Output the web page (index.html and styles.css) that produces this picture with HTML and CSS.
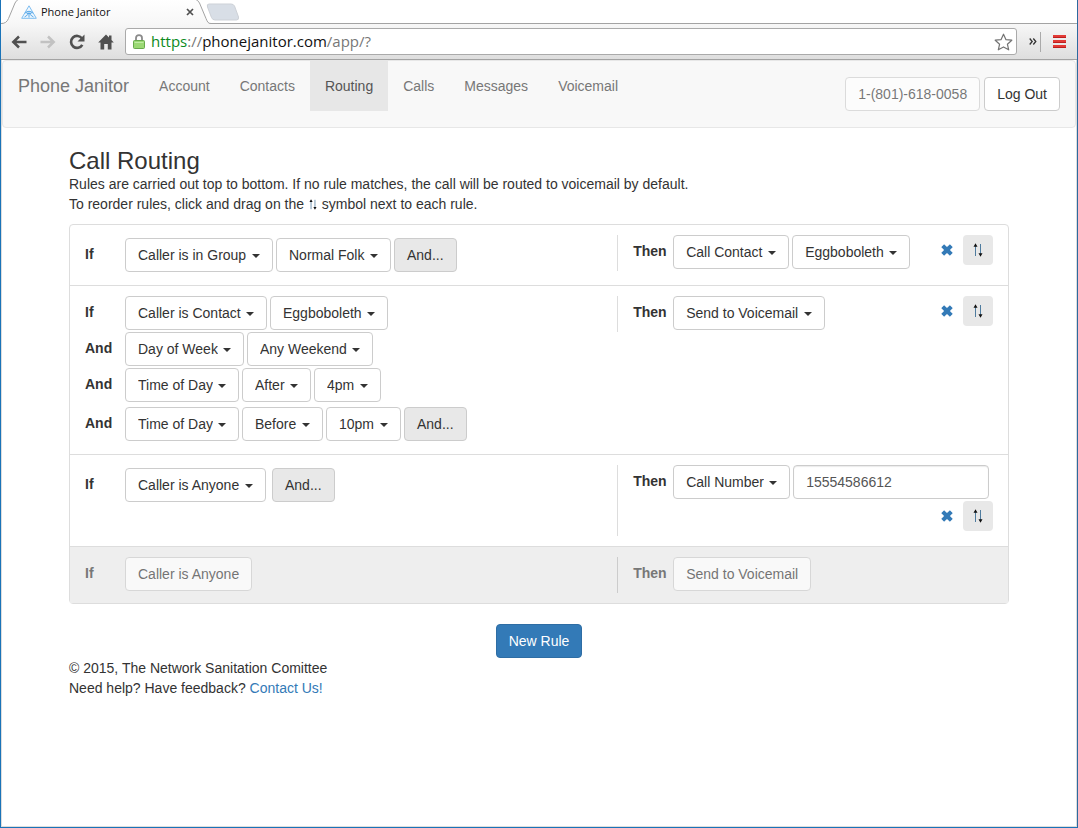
FILE: index.html
```html
<!DOCTYPE html>
<html lang="en">
<head>
<meta charset="utf-8">
<title>Phone Janitor</title>
<link rel="stylesheet" href="styles.css">
</head>
<body>
<svg class="sprite" aria-hidden="true">
  <symbol id="remove" viewBox="0 0 12 12"><path d="M0.4 2.9 2.9 0.4Q3.1 0.2 3.3 0.4L6 3.1 8.7 0.4Q8.9 0.2 9.1 0.4L11.6 2.9Q11.8 3.1 11.6 3.3L8.9 6 11.6 8.7Q11.8 8.9 11.6 9.1L9.1 11.6Q8.9 11.8 8.7 11.6L6 8.9 3.3 11.6Q3.1 11.8 2.9 11.6L0.4 9.1Q0.2 8.9 0.4 8.7L3.1 6 0.4 3.3Q0.2 3.1 0.4 2.9Z" fill="#337ab7"/></symbol>
  <symbol id="updown" viewBox="0 0 10 14"><path d="M2.500 13V2M7.500 1V12" stroke="#3d6f96" stroke-width="0.900" fill="none"/><path d="M2.500 0.300 4.500 3.800H0.500ZM7.500 13.700 9.500 10.200H5.500Z" fill="#111"/></symbol>
</svg>
<div class="window">
  <header class="browser">
    <div class="tabstrip">
      <div class="tab">
        <svg class="tab-shape" width="210" height="24" viewBox="0 0 210 24" aria-hidden="true">
          <defs><linearGradient id="tabfill" x1="0" y1="0" x2="0" y2="1"><stop offset="0" stop-color="#ffffff"/><stop offset="1" stop-color="#f7f7f7"/></linearGradient></defs>
          <path d="M0 24V23.500C4 23.500 6 22 7.500 18.500L14 3Q15.500 0 18 -1H194Q197 0 198.500 3L205 18.500C206.500 22 207 23.500 210 23.500V24Z" fill="url(#tabfill)"/>
          <path d="M0 23.500C4 23.500 6 22 7.500 18.500L14 3Q15.500 0 18 -1M194 -1Q197 0 198.500 3L205 18.500C206.500 22 207 23.500 210 23.500" fill="none" stroke="#a3a3a3"/>
        </svg>
        <svg class="favicon" width="16" height="14" viewBox="0 0 16 14" aria-hidden="true"><path d="M8 0.800 15.300 13.300H0.700Z" fill="#f1f8fe" stroke="#7dbdf0" stroke-width="1"/><path d="M4.200 8.200Q8 4.300 11.800 8.200M5.800 9.300Q8 7.200 10.200 9.300" fill="none" stroke="#58a8e8" stroke-width="1.200"/><path d="M8 8V12.500M3.500 12 6.500 10M12.500 12 9.500 10" stroke="#58a8e8" fill="none"/></svg>
        <span class="tab-title">Phone Janitor</span>
        <button class="tool tab-close" type="button" aria-label="Close tab"><svg width="8" height="8" viewBox="0 0 8 8"><path d="M1 1 7 7M7 1 1 7" stroke="#505050" stroke-width="1.700"/></svg></button>
      </div>
      <button class="tool new-tab" type="button" aria-label="New tab"><svg width="34" height="18" viewBox="0 0 34 18"><path d="M3 1H25Q27.500 1 28.500 3L32.500 14Q33 17 30.500 17H9Q6.500 17 5.500 14.500L1.500 4Q0.500 1 3 1Z" fill="#d8dee6" stroke="#cdd1d7"/></svg></button>
    </div>
    <div class="toolbar">
      <div class="nav-tools">
        <button class="tool" type="button" aria-label="Back"><svg width="16" height="16" viewBox="0 0 16 16"><path d="M15.500 8H3M8 2.500 2.300 8 8 13.500" fill="none" stroke="#505050" stroke-width="2.500"/></svg></button>
        <button class="tool" type="button" aria-label="Forward"><svg width="16" height="16" viewBox="0 0 16 16"><path d="M0.500 8H13M8 2.500 13.700 8 8 13.500" fill="none" stroke="#c2c2c2" stroke-width="2.500"/></svg></button>
        <button class="tool" type="button" aria-label="Reload"><svg width="16" height="16" viewBox="0 0 16 16"><path d="M13 4.500A6 6 0 1 0 13.300 10.800" fill="none" stroke="#505050" stroke-width="2.600"/><path d="M15.500 0.500V7.500H8.500Z" fill="#505050"/></svg></button>
        <button class="tool" type="button" aria-label="Home"><svg width="16" height="16" viewBox="0 0 16 16"><path d="M8 0.500 11 3.500V1.500H13.500V6L15.800 8.500H13.500V15.500H9.800V10H6.200V15.500H2.500V8.500H0.200Z" fill="#505050"/></svg></button>
      </div>
      <div class="address">
        <svg width="12" height="15" viewBox="0 0 12 15" aria-hidden="true"><path d="M3 8V4Q3 1.200 6 1.200T9 4V8" fill="none" stroke="#8b8b8b" stroke-width="1.800"/><rect x="0.500" y="6.500" width="11" height="8" rx="1" fill="#9ad873" stroke="#67a94c"/><path d="M1.500 8.500H10.500" stroke="#c0ebA5"/></svg>
        <div class="url" role="textbox" aria-label="Address" contenteditable="true" spellcheck="false"><span class="url-scheme">https</span><span class="url-dim">://</span>phonejanitor.com<span class="url-dim">/app/?</span></div>
        <button class="tool" type="button" aria-label="Bookmark"><svg width="19" height="18" viewBox="0 0 19 18"><path d="M9.500 1.200 12 6.700 17.800 7.200 13.400 11.200 14.700 16.800 9.500 13.900 4.300 16.800 5.600 11.200 1.200 7.200 7 6.700Z" fill="#fff" stroke="#737373" stroke-width="1.200" stroke-linejoin="round"/></svg></button>
      </div>
      <button class="tool overflow" type="button" aria-label="More"><svg width="8" height="7" viewBox="0 0 8 7"><path d="M0.700 0.500 3.200 3.500 0.700 6.500M4.300 0.500 6.800 3.500 4.300 6.500" fill="none" stroke="#333" stroke-width="1.300"/></svg></button>
      <button class="tool menu" type="button" aria-label="Menu"><svg width="13" height="13" viewBox="0 0 13 13"><path d="M0 1.500H13M0 6.500H13M0 11.500H13" stroke="#e23b36" stroke-width="3"/><path d="M0 2.500H13M0 7.500H13M0 12.500H13" stroke="#bd1f1f"/></svg></button>
    </div>
  </header>

  <nav class="navbar">
    <a class="brand" href="#">Phone Janitor</a>
    <ul class="nav-links">
      <li><a href="#">Account</a></li>
      <li><a href="#">Contacts</a></li>
      <li><a class="active" href="#" aria-current="page">Routing</a></li>
      <li><a href="#">Calls</a></li>
      <li><a href="#">Messages</a></li>
      <li><a href="#">Voicemail</a></li>
    </ul>
    <div class="nav-account">
      <button class="btn" type="button" disabled>1-(801)-618-0058</button>
      <button class="btn" type="button">Log Out</button>
    </div>
  </nav>

  <main class="container">
    <h1>Call Routing</h1>
    <p>Rules are carried out top to bottom. If no rule matches, the call will be routed to voicemail by default.</p>
    <p>To reorder rules, click and drag on the <svg class="inline-icon" width="10" height="11" role="img" aria-label="up and down arrows"><use href="#updown"/></svg> symbol next to each rule.</p>

    <ul class="rules">
      <li class="rule">
        <div class="conditions">
          <div class="line line-last"><b class="word">If</b>
            <select class="btn dropdown" aria-label="Condition"><option>Caller is in Group</option></select>
            <select class="btn dropdown" aria-label="Group"><option>Normal Folk</option></select>
            <button class="btn btn-and" type="button">And...</button></div>
        </div>
        <div class="outcome">
          <div class="line"><b class="word">Then</b>
            <select class="btn dropdown" aria-label="Action"><option>Call Contact</option></select>
            <select class="btn dropdown" aria-label="Contact"><option>Eggboboleth</option></select></div>
          <div class="actions">
            <button class="tool" type="button" aria-label="Remove rule"><svg width="12" height="12"><use href="#remove"/></svg></button>
            <button class="drag" type="button" aria-label="Reorder rule"><svg width="10" height="14"><use href="#updown"/></svg></button></div>
        </div>
      </li>
      <li class="rule">
        <div class="conditions">
          <div class="line"><b class="word">If</b>
            <select class="btn dropdown" aria-label="Condition"><option>Caller is Contact</option></select>
            <select class="btn dropdown" aria-label="Contact"><option>Eggboboleth</option></select></div>
          <div class="line"><b class="word">And</b>
            <select class="btn dropdown" aria-label="Condition"><option>Day of Week</option></select>
            <select class="btn dropdown" aria-label="Day"><option>Any Weekend</option></select></div>
          <div class="line"><b class="word">And</b>
            <select class="btn dropdown" aria-label="Condition"><option>Time of Day</option></select>
            <select class="btn dropdown" aria-label="Comparison"><option>After</option></select>
            <select class="btn dropdown" aria-label="Time"><option>4pm</option></select></div>
          <div class="line line-last"><b class="word">And</b>
            <select class="btn dropdown" aria-label="Condition"><option>Time of Day</option></select>
            <select class="btn dropdown" aria-label="Comparison"><option>Before</option></select>
            <select class="btn dropdown" aria-label="Time"><option>10pm</option></select>
            <button class="btn btn-and" type="button">And...</button></div>
        </div>
        <div class="outcome">
          <div class="line"><b class="word">Then</b>
            <select class="btn dropdown" aria-label="Action"><option>Send to Voicemail</option></select></div>
          <div class="actions">
            <button class="tool" type="button" aria-label="Remove rule"><svg width="12" height="12"><use href="#remove"/></svg></button>
            <button class="drag" type="button" aria-label="Reorder rule"><svg width="10" height="14"><use href="#updown"/></svg></button></div>
        </div>
      </li>
      <li class="rule">
        <div class="conditions">
          <div class="line line-last line-single"><b class="word">If</b>
            <select class="btn dropdown" aria-label="Condition"><option>Caller is Anyone</option></select>
            <button class="btn btn-and" type="button">And...</button></div>
        </div>
        <div class="outcome">
          <div class="line"><b class="word">Then</b>
            <select class="btn dropdown" aria-label="Action"><option>Call Number</option></select>
            <input class="number" type="text" value="15554586612" aria-label="Phone number"></div>
          <div class="actions">
            <button class="tool" type="button" aria-label="Remove rule"><svg width="12" height="12"><use href="#remove"/></svg></button>
            <button class="drag" type="button" aria-label="Reorder rule"><svg width="10" height="14"><use href="#updown"/></svg></button></div>
        </div>
      </li>
      <li class="rule rule-default">
        <div class="conditions">
          <div class="line"><b class="word">If</b>
            <button class="btn" type="button" disabled>Caller is Anyone</button></div>
        </div>
        <div class="outcome">
          <div class="line"><b class="word">Then</b>
            <button class="btn" type="button" disabled>Send to Voicemail</button></div>
        </div>
      </li>
    </ul>
    <div class="new-rule"><button class="btn btn-primary" type="button">New Rule</button></div>
    <footer>
      <p>© 2015, The Network Sanitation Comittee</p>
      <p>Need help? Have feedback? <a href="#">Contact Us!</a></p>
    </footer>
  </main>
</div>
</body>
</html>
```

FILE: styles.css
```css
* { box-sizing: border-box; }
body {
  margin: 0;
  font: 14px/20px "Liberation Sans", Arial, sans-serif;
  color: #333;
  background: #fff;
}
h1, p, ul { margin: 0; padding: 0; }
ul { list-style: none; }
a { color: #337ab7; text-decoration: none; }
button, select, input { font: inherit; color: inherit; margin: 0; }
svg { display: block; flex: none; }
.sprite { position: absolute; width: 0; height: 0; }

.window {
  min-height: 100vh;
  border: 1px solid #1a73b8;
  border-top: 0;
  border-right-color: #2d6a9f;
  box-shadow: inset 0 -1px #ddd, inset 1px 0 #ddd, inset -1px 0 #ddd;
}

/* Browser frame */
.tool {
  display: flex;
  align-items: center;
  justify-content: center;
  padding: 0;
  border: 0;
  background: none;
}
.tabstrip {
  display: flex;
  height: 24px;
  border-bottom: 1px solid #a3a3a3;
  background: #fff;
}
.tab {
  position: relative;
  display: flex;
  align-items: center;
  gap: 4px;
  width: 205px;
  height: 24px;
  padding: 0 11px 0 20px;
  isolation: isolate;
}
.tab-shape { position: absolute; left: 0; top: 0; z-index: -1; }
.tab-title { flex: 1; font: 11px/16px "Open Sans", "Noto Sans", sans-serif; color: #111; }
.tab-close { width: 10px; height: 16px; }
.new-tab { height: 24px; }
.toolbar {
  display: flex;
  align-items: center;
  height: 36px;
  padding: 0 11px 0 10px;
  border-bottom: 1px solid #a3a3a3;
  background: linear-gradient(#f7f7f7, #dedede);
}
.nav-tools { display: flex; gap: 13px; padding-right: 11px; }
.address {
  flex: 1;
  display: flex;
  align-items: center;
  gap: 6px;
  height: 27px;
  padding: 0 3px 0 7px;
  border: 1px solid #aaa;
  border-radius: 3px;
  background: #fff;
}
.url { flex: 1; padding-bottom: 2px; font: 15px/22px "Open Sans", "Noto Sans", sans-serif; color: #111; outline: 0; }
.url-scheme { color: #0b8a1c; }
.url-dim { color: #777; }
.overflow { height: 20px; padding: 0 3px 0 12px; border-right: 1px solid #aaa; }
.menu { padding-left: 12px; }

/* Site navigation */
.navbar {
  display: flex;
  align-items: flex-start;
  margin: 0 1px 20px;
  padding: 0 15px;
  border: 1px solid #e7e7e7;
  border-radius: 4px;
  background: #f8f8f8;
}
.brand { padding: 15px 15px 15px 0; font-size: 18px; color: #777; }
.nav-links { display: flex; }
.nav-links a { display: block; padding: 15px; color: #777; }
.nav-links .active { color: #555; background: #e7e7e7; }
.nav-account { display: flex; gap: 4px; margin-left: auto; padding: 16px 0; }

/* Controls */
.btn {
  height: 34px;
  padding: 6px 12px;
  border: 1px solid #ccc;
  border-radius: 4px;
  background: #fff;
  color: #333;
  line-height: 20px;
  white-space: nowrap;
}
.btn:disabled { opacity: 0.65; }
.btn-and { background: #e8e8e8; }
.btn-primary { border-color: #2e6da4; background: #337ab7; color: #fff; }
.dropdown {
  appearance: none;
  padding-right: 25px;
  background: #fff url("data:image/svg+xml,%3Csvg xmlns='http://www.w3.org/2000/svg' width='8' height='4'%3E%3Cpath d='M0 0H8L4 4Z' fill='%23333'/%3E%3C/svg%3E") no-repeat right 12px top 15px;
}
.number {
  width: 196px;
  height: 34px;
  padding: 6px 12px;
  border: 1px solid #ccc;
  border-radius: 4px;
  color: #555;
  box-shadow: inset 0 1px 1px rgba(0, 0, 0, 0.08);
}

/* Rules */
.container { max-width: 940px; margin: 0 auto; }
h1 { font-size: 24px; line-height: 26px; font-weight: 400; }
.inline-icon { display: inline-block; vertical-align: -1px; }
.rules { margin: 10px 0 20px; border: 1px solid #ddd; border-radius: 4px; }
.rule { display: grid; grid-template-columns: 7fr 5fr; align-items: start; padding: 10px 0; }
.rule + .rule { border-top: 1px solid #ddd; }
.conditions { padding: 0 15px; }
.outcome {
  display: flex;
  flex-wrap: wrap;
  min-height: 36px;
  padding: 0 15px;
  border-left: 1px solid #ddd;
}
.line { display: flex; gap: 3px; padding-bottom: 2px; }
.line-last { padding: 3px 0; }
.line-single { gap: 6px; }
.word { width: 37px; line-height: 32px; }
.line-single .word { width: 34px; }
.actions { display: flex; gap: 10px; height: 35px; margin-left: auto; }
.actions .tool { height: 30px; }
.drag {
  display: flex;
  align-items: center;
  justify-content: center;
  width: 30px;
  height: 30px;
  padding: 0;
  border: 0;
  border-radius: 4px;
  background: #e8e8e8;
  color: #222;
}
.rule-default { background: #eee; }
.rule-default .word { color: #777; }
.rule-default .outcome { border-color: #ccc; }
.new-rule { display: flex; justify-content: center; }
```
